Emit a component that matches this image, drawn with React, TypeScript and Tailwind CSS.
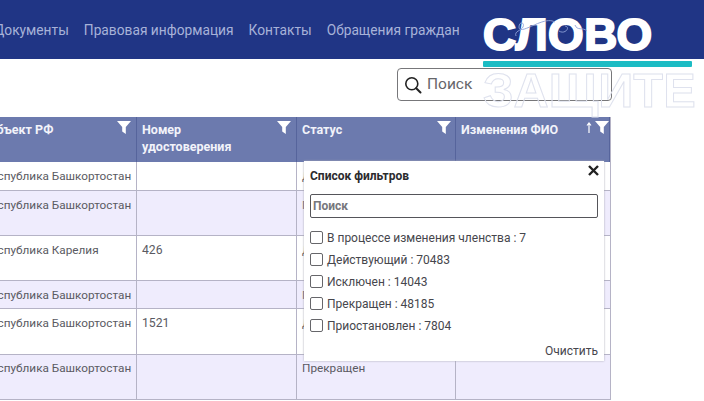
import React from "react";

const rows = [
  { h: "h-[29px]", pt: "pt-[6px]", region: "Республика Башкортостан", num: "", status: "Действующий", alt: false },
  { h: "h-[45px]", pt: "pt-[6px]", region: "Республика Башкортостан", num: "", status: "Прекращен", alt: true },
  { h: "h-[45px]", pt: "pt-[6px]", region: "Республика Карелия", num: "426", status: "Действующий", alt: false },
  { h: "h-[28px]", pt: "pt-[6px]", region: "Республика Башкортостан", num: "", status: "Прекращен", alt: true },
  { h: "h-[46px]", pt: "pt-[6px]", region: "Республика Башкортостан", num: "1521", status: "Действующий", alt: false },
  { h: "h-[45px]", pt: "pt-[5px]", region: "Республика Башкортостан", num: "", status: "Прекращен", alt: true },
];

const Funnel = ({ className }: { className: string }) => (
  <svg viewBox="0 0 14 13" className={className} fill="#fff">
    <path d="M0 0H14L8.8 6V13L5.2 10.6V6Z" />
  </svg>
);

const Header = ({ label, w, funnel, arrow }: { label: React.ReactNode; w: string; funnel: string; arrow?: boolean }) => (
  <div className={`${w} relative shrink-0 border-r border-[#56649c] pl-[5px] pt-[4px] text-[12.5px] leading-[17px] font-bold whitespace-nowrap text-[#f2f3fa]`}>
    {label}
    {arrow && (
      <svg viewBox="0 0 6 11" className="absolute right-[17px] top-[5px] h-[11px] w-[6px]" fill="none" stroke="#fff" strokeWidth="1.2">
        <path d="M3 11V1M1 3.5L3 1L5 3.5" />
      </svg>
    )}
    <Funnel className={`absolute ${funnel} top-[4px] h-[13px] w-[14px]`} />
  </div>
);

const filters = [
  "В процессе изменения членства : 7",
  "Действующий : 70483",
  "Исключен : 14043",
  "Прекращен : 48185",
  "Приостановлен : 7804",
];

export default function App() {
  return (
    <div className="relative h-[401px] w-[704px] overflow-hidden bg-white font-['Roboto',sans-serif]">
      <nav className="flex h-[59px] items-start gap-[15px] bg-[#203585] pt-[21px] text-[13.75px] leading-[18px] whitespace-nowrap text-[#a7b2d8]">
        <span className="-ml-[6px]">Документы</span>
        <span>Правовая информация</span>
        <span>Контакты</span>
        <span>Обращения граждан</span>
      </nav>

      <div className="flex h-[58px] justify-end pr-[92px] pt-[9px]">
        <div className="flex h-[33px] w-[215px] items-center gap-[5px] rounded-[4px] border border-[#77777a] pl-[6px] text-[15.5px] text-[#66666a]">
          <svg viewBox="0 0 18 18" className="h-[18px] w-[18px]" fill="none" stroke="#222" strokeWidth="1.6">
            <circle cx="7.8" cy="7.8" r="6" />
            <path d="M12.2 12.2L16.5 16.5" strokeWidth="2" strokeLinecap="round" />
          </svg>
          Поиск
        </div>
      </div>

      <div className="-ml-[23px] w-[634px] border-r border-[#b5b3c6] text-[11.75px] leading-[16px] whitespace-nowrap text-[#5a5a62]">
        <div className="flex h-[45px] bg-[#6c7aae]">
          <Header w="w-[160px]" funnel="right-[5px]" label="Субъект РФ" />
          <Header w="w-[160px]" funnel="right-[5px]" label={<>Номер<br />удостоверения</>} />
          <Header w="w-[159px]" funnel="right-[4px]" label="Статус" />
          <Header w="w-[154px]" funnel="right-[0px]" label="Изменения ФИО" arrow />
        </div>
        {rows.map((r, i) => (
          <div key={i} className={`flex ${r.h} border-b border-[#b5b3c6] ${r.alt ? "bg-[#efecfd]" : "bg-white"}`}>
            <div className={`w-[160px] shrink-0 border-r border-[#b5b3c6] pl-[7px] ${r.pt}`}>{r.region}</div>
            <div className={`w-[160px] shrink-0 border-r border-[#b5b3c6] pl-[5px] text-[12.2px] ${r.pt}`}>{r.num}</div>
            <div className={`w-[159px] shrink-0 border-r border-[#b5b3c6] pl-[5px] ${r.pt}`}>{r.status}</div>
            <div className="w-[154px] shrink-0" />
          </div>
        ))}
      </div>

      <div className="absolute left-[304px] top-[161px] flex h-[200px] w-[300px] flex-col bg-white px-[6px] shadow-[0_0_2px_#a9a9b4]">
        <button className="absolute right-[5px] top-[4px] text-[#222]">
          <svg viewBox="0 0 11 11" className="h-[11px] w-[11px]" stroke="#222" strokeWidth="2.4">
            <path d="M1 1L10 10M10 1L1 10" />
          </svg>
        </button>
        <div className="pt-[7px] text-[12px] leading-[16px] font-bold whitespace-nowrap text-[#2b2b2e]">Список фильтров</div>
        <div className="mt-[10px] flex h-[24px] w-[288px] items-center rounded-[2px] border border-[#55555a] pl-[2px] text-[12px] font-bold text-[#77777c]">
          Поиск
        </div>
        <div className="mt-[11px] flex flex-col gap-[5px]">
          {filters.map((f) => (
            <div key={f} className="flex h-[17px] items-center gap-[4px] text-[12px] whitespace-nowrap text-[#46464c]">
              <span className="h-[13px] w-[13px] rounded-[2px] border border-[#66666a] bg-white" />
              {f}
            </div>
          ))}
        </div>
        <div className="mt-auto pb-[2px] text-right text-[12px] leading-[16px] text-[#46464c]">Очистить</div>
      </div>

      <div className="absolute left-[483px] top-[10px] w-[215px]">
        <div className="origin-left scale-x-[1.04] text-[44px] leading-[50px] font-black tracking-[0.5px] text-white font-['Liberation_Sans',sans-serif] [-webkit-text-stroke:2px_#fff]">СЛОВО</div>
        <svg viewBox="0 0 80 22" className="absolute left-[32px] top-[9px] h-[22px] w-[80px]" fill="none" stroke="#8ea2d8" strokeWidth="0.9">
          <path d="M1 17C-1 12 6 12 8 8C10 3 4 2 4 8C4 14 14 8 24 4C32 1 36 1 40 3M44 12C50 16 56 8 50 7M60 6C62 12 68 8 72 12" />
        </svg>
        <div className="mt-[1px] h-[6px] w-[209px] rounded-[1px] bg-[#1cbcc4]" />
        <div className="mt-[2px] origin-left scale-x-[1.015] text-[48px] leading-[44px] font-bold text-transparent font-['Liberation_Sans',sans-serif] [-webkit-text-stroke:1px_#dfe2ee]">ЗАЩИТЕ</div>
      </div>
    </div>
  );
}
